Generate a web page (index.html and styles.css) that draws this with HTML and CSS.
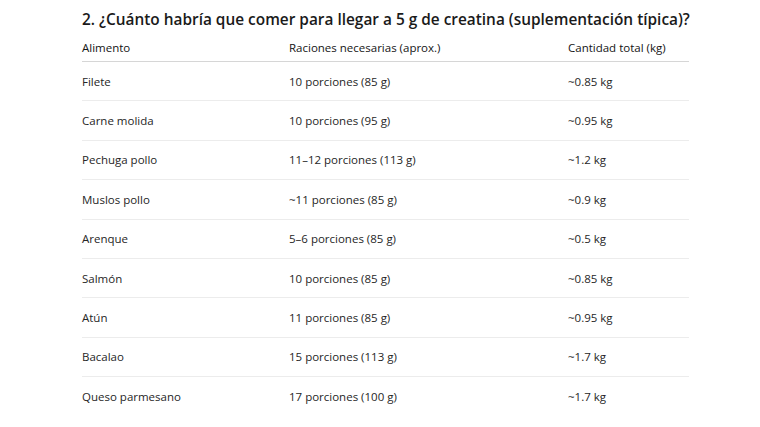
FILE: index.html
```html
<!DOCTYPE html>
<html lang="es">
<head>
<meta charset="utf-8">
<link rel="stylesheet" href="styles.css">
</head>
<body>
<div class="page">
  <h2 class="title">2. ¿Cuánto habría que comer para llegar a 5 g de creatina (suplementación típica)?</h2>
  <div class="table">
    <div class="row head"><div>Alimento</div><div>Raciones necesarias (aprox.)</div><div>Cantidad total (kg)</div></div>
    <div class="row"><div>Filete</div><div>10 porciones (85 g)</div><div>~0.85 kg</div></div>
    <div class="row"><div>Carne molida</div><div>10 porciones (95 g)</div><div>~0.95 kg</div></div>
    <div class="row"><div>Pechuga pollo</div><div>11–12 porciones (113 g)</div><div>~1.2 kg</div></div>
    <div class="row"><div>Muslos pollo</div><div>~11 porciones (85 g)</div><div>~0.9 kg</div></div>
    <div class="row"><div>Arenque</div><div>5–6 porciones (85 g)</div><div>~0.5 kg</div></div>
    <div class="row"><div>Salmón</div><div>10 porciones (85 g)</div><div>~0.85 kg</div></div>
    <div class="row"><div>Atún</div><div>11 porciones (85 g)</div><div>~0.95 kg</div></div>
    <div class="row"><div>Bacalao</div><div>15 porciones (113 g)</div><div>~1.7 kg</div></div>
    <div class="row last"><div>Queso parmesano</div><div>17 porciones (100 g)</div><div>~1.7 kg</div></div>
  </div>
</div>
</body>
</html>
```
FILE: styles.css
```css
html, body {
  margin: 0;
  padding: 0;
  background: #ffffff;
}
body {
  font-family: "Open Sans", "Noto Sans", "Liberation Sans", sans-serif;
  color: #2a2a2a;
}
.page {
  width: 607px;
  padding: 9px 0 0 82px;
}
.title {
  margin: 0;
  font-size: 15.4px;
  line-height: 22px;
  font-weight: 600;
  color: #1a1a1a;
  white-space: nowrap;
}
.table {
  margin-top: 2px;
}
.row {
  display: grid;
  grid-template-columns: 207px 279px 1fr;
  align-items: center;
  box-sizing: border-box;
  height: 39.375px;
  border-bottom: 1px solid #ececec;
  font-size: 11.5px;
  color: #262626;
}
.row.head {
  height: 29px;
  border-bottom: 1px solid #d6d6d6;
  color: #141414;
  font-weight: 500;
}
.row.last {
  border-bottom: none;
}
```
